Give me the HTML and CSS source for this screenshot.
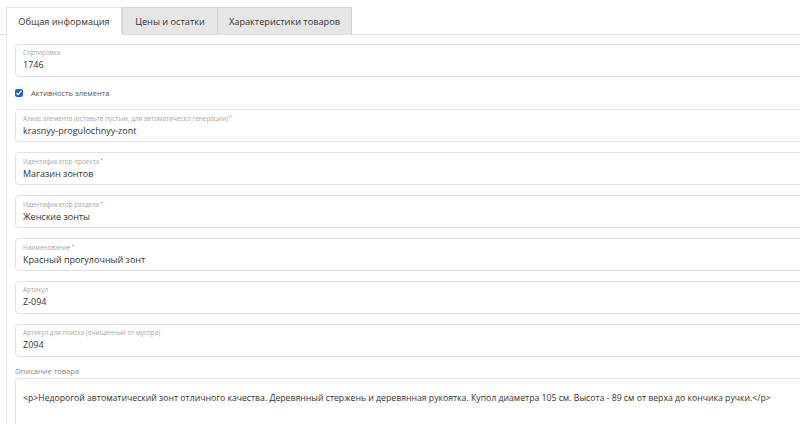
FILE: index.html
```html
<!DOCTYPE html>
<html lang="ru">
<head>
<meta charset="utf-8">
<title>Товар</title>
<link rel="stylesheet" href="styles.css">
</head>
<body>
<div class="tabs">
  <div class="tab tab-active">Общая информация</div>
  <div class="tab">Цены и остатки</div>
  <div class="tab">Характеристики товаров</div>
</div>
<div class="panel">
  <div class="field">
    <div class="label">Сортировка</div>
    <div class="value">1746</div>
  </div>
  <label class="checkrow"><input type="checkbox" class="check" checked><span>Активность элемента</span></label>
  <div class="field">
    <div class="label">Алиас элемента (оставьте пустым, для автоматическо генерации)<span class="req">*</span></div>
    <div class="value">krasnyy-progulochnyy-zont</div>
  </div>
  <div class="field">
    <div class="label">Идентификатор проекта<span class="req">*</span></div>
    <div class="value">Магазин зонтов</div>
  </div>
  <div class="field">
    <div class="label">Идентификатор раздела<span class="req">*</span></div>
    <div class="value">Женские зонты</div>
  </div>
  <div class="field">
    <div class="label">Наименование<span class="req">*</span></div>
    <div class="value">Красный прогулочный зонт</div>
  </div>
  <div class="field">
    <div class="label">Артикул</div>
    <div class="value">Z-094</div>
  </div>
  <div class="field">
    <div class="label">Артикул для поиска (очищенный от мусора)</div>
    <div class="value">Z094</div>
  </div>
  <div class="desc-label">Описание товара</div>
  <div class="textarea">&lt;p&gt;Недорогой автоматический зонт отличного качества. Деревянный стержень и деревянная рукоятка. Купол диаметра 105 см. Высота - 89 см от верха до кончика ручки.&lt;/p&gt;</div>
</div>
</body>
</html>
```
FILE: styles.css
```css
html, body {
  margin: 0;
  padding: 0;
  background: #fff;
  font-family: "Open Sans", "Liberation Sans", sans-serif;
  color: #333;
  overflow: hidden;
}

.tabs {
  display: flex;
  padding: 7px 0 0 6px;
  border-bottom: 1px solid #e0e0e0;
  height: 27px;
}

.tab {
  box-sizing: border-box;
  height: 27px;
  display: flex;
  align-items: center;
  justify-content: center;
  font-size: 9.2px;
  color: #333;
  background: #e6e6e6;
  border: 1px solid #d2d2d2;
  border-bottom: none;
  border-left: none;
}

.tab:nth-child(1) { width: 116px; }
.tab:nth-child(2) { width: 96px; border-left: 1px solid #d2d2d2; }
.tab:nth-child(3) { width: 134px; }

.tab-active {
  background: #fff;
  border: 1px solid #e4e4e4;
  border-bottom: none;
  height: 28px;
  margin-bottom: -1px;
}

.panel {
  margin-left: 6px;
  border-left: 1px solid #e6e6e6;
  padding: 9px 0 0 8px;
  overflow: hidden;
  height: 400px;
}

.field {
  box-sizing: border-box;
  height: 33px;
  margin-right: -20px;
  margin-bottom: 10px;
  border: 1px solid #e3e3e3;
  border-radius: 4px;
  padding: 3px 7px 0;
}

.label {
  font-size: 6.4px;
  line-height: 9px;
  color: #a8a8a8;
  white-space: nowrap;
}

.req {
  color: #d09090;
  margin-left: 1px;
  vertical-align: 2px;
  font-size: 5.5px;
}

.value {
  font-size: 9px;
  line-height: 15px;
  color: #333;
  white-space: nowrap;
}

.checkrow {
  display: flex;
  align-items: center;
  height: 32px;
  margin-top: -10px;
  margin-bottom: 0;
  font-size: 7.5px;
  color: #555;
}

.check {
  width: 8px;
  height: 8px;
  margin: 0 8px 0 0;
  accent-color: #1565d8;
}

.desc-label {
  margin-top: -3px;
  font-size: 7.5px;
  line-height: 14px;
  color: #888;
}

.textarea {
  box-sizing: border-box;
  height: 60px;
  margin-right: -20px;
  border: 1px solid #e3e3e3;
  border-radius: 4px;
  padding: 13px 7px 0;
  font-size: 8.7px;
  color: #333;
  white-space: nowrap;
}
```
